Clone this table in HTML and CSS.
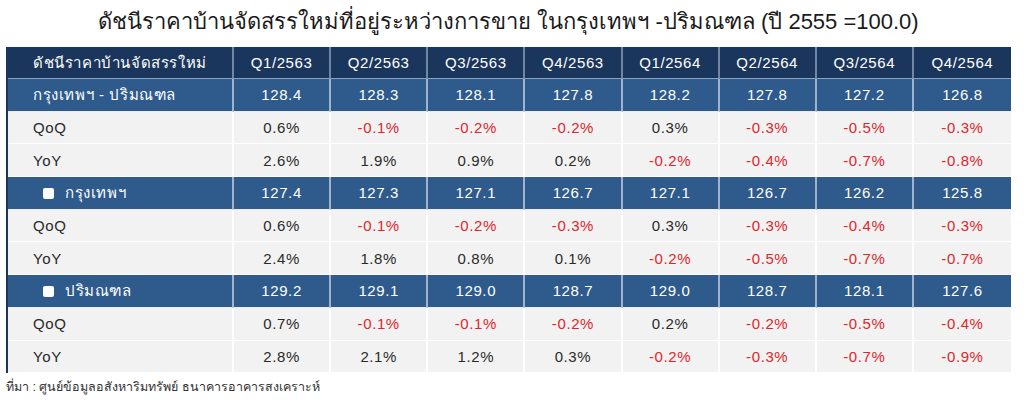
FILE: index.html
```html
<!DOCTYPE html>
<html lang="th">
<head>
<meta charset="utf-8">
<link rel="stylesheet" href="styles.css">
</head>
<body>
<div class="wrap">
  <h1 class="title">ดัชนีราคาบ้านจัดสรรใหม่ที่อยู่ระหว่างการขาย ในกรุงเทพฯ -ปริมณฑล (ปี 2555 =100.0)</h1>
  <table class="idx">
    <colgroup><col class="c-label"><col span="8"></colgroup>
    <tr class="head">
      <th class="label">ดัชนีราคาบ้านจัดสรรใหม่</th>
      <th>Q1/2563</th><th>Q2/2563</th><th>Q3/2563</th><th>Q4/2563</th>
      <th>Q1/2564</th><th>Q2/2564</th><th>Q3/2564</th><th>Q4/2564</th>
    </tr>
    <tr class="band">
      <td class="label">กรุงเทพฯ - ปริมณฑล</td>
      <td>128.4</td><td>128.3</td><td>128.1</td><td>127.8</td><td>128.2</td><td>127.8</td><td>127.2</td><td>126.8</td>
    </tr>
    <tr class="light">
      <td class="label">QoQ</td>
      <td>0.6%</td><td class="neg">-0.1%</td><td class="neg">-0.2%</td><td class="neg">-0.2%</td><td>0.3%</td><td class="neg">-0.3%</td><td class="neg">-0.5%</td><td class="neg">-0.3%</td>
    </tr>
    <tr class="light">
      <td class="label">YoY</td>
      <td>2.6%</td><td>1.9%</td><td>0.9%</td><td>0.2%</td><td class="neg">-0.2%</td><td class="neg">-0.4%</td><td class="neg">-0.7%</td><td class="neg">-0.8%</td>
    </tr>
    <tr class="band">
      <td class="label sub"><span class="bullet"></span>กรุงเทพฯ</td>
      <td>127.4</td><td>127.3</td><td>127.1</td><td>126.7</td><td>127.1</td><td>126.7</td><td>126.2</td><td>125.8</td>
    </tr>
    <tr class="light">
      <td class="label">QoQ</td>
      <td>0.6%</td><td class="neg">-0.1%</td><td class="neg">-0.2%</td><td class="neg">-0.3%</td><td>0.3%</td><td class="neg">-0.3%</td><td class="neg">-0.4%</td><td class="neg">-0.3%</td>
    </tr>
    <tr class="light">
      <td class="label">YoY</td>
      <td>2.4%</td><td>1.8%</td><td>0.8%</td><td>0.1%</td><td class="neg">-0.2%</td><td class="neg">-0.5%</td><td class="neg">-0.7%</td><td class="neg">-0.7%</td>
    </tr>
    <tr class="band">
      <td class="label sub"><span class="bullet"></span>ปริมณฑล</td>
      <td>129.2</td><td>129.1</td><td>129.0</td><td>128.7</td><td>129.0</td><td>128.7</td><td>128.1</td><td>127.6</td>
    </tr>
    <tr class="light">
      <td class="label">QoQ</td>
      <td>0.7%</td><td class="neg">-0.1%</td><td class="neg">-0.1%</td><td class="neg">-0.2%</td><td>0.2%</td><td class="neg">-0.2%</td><td class="neg">-0.5%</td><td class="neg">-0.4%</td>
    </tr>
    <tr class="light">
      <td class="label">YoY</td>
      <td>2.8%</td><td>2.1%</td><td>1.2%</td><td>0.3%</td><td class="neg">-0.2%</td><td class="neg">-0.3%</td><td class="neg">-0.7%</td><td class="neg">-0.9%</td>
    </tr>
  </table>
  <p class="source">ที่มา : ศูนย์ข้อมูลอสังหาริมทรัพย์ ธนาคารอาคารสงเคราะห์</p>
</div>
</body>
</html>
```

FILE: styles.css
```css
html, body {
  margin: 0;
  padding: 0;
  background: #ffffff;
}

body {
  font-family: "Liberation Sans", Arial, sans-serif;
  color: #222222;
}

.wrap {
  width: 1005px;
  margin-left: 6px;
}

.title {
  margin: 0;
  height: 47px;
  line-height: 44px;
  font-size: 22px;
  font-weight: normal;
  text-align: center;
  color: #1a1a1a;
  white-space: nowrap;
}

.idx {
  width: 1005px;
  table-layout: fixed;
  border-collapse: separate;
  border-spacing: 0;
  border-left: 2px solid #1b365d;
  font-size: 15px;
  letter-spacing: 0.6px;
}

.c-label {
  width: 226px;
}

.idx th,
.idx td {
  padding: 0;
  text-align: center;
  vertical-align: middle;
  border-right: 2px solid #ffffff;
  border-bottom: 1px solid #ffffff;
}

.idx th:last-child,
.idx td:last-child {
  border-right: none;
}

.idx .label {
  text-align: left;
  padding-left: 25px;
}

.head {
  height: 32px;
}

.head th {
  background: #1b365d;
  color: #ffffff;
  font-weight: normal;
  border-right-color: #6f86a6;
  border-bottom-color: #8ea3bf;
}

.band,
.light {
  height: 32.7px;
}

.band td {
  background: #2e5a8c;
  color: #ffffff;
  border-right-color: #9fb3cc;
  border-bottom-color: #e8edf3;
}

.light td {
  background: #f2f2f2;
  color: #2a2a2a;
}

.light td.neg {
  color: #e0262b;
}

.idx .sub {
  padding-left: 35px;
}

.bullet {
  display: inline-block;
  width: 11px;
  height: 11px;
  background: #ffffff;
  border-radius: 2px;
  margin-right: 11px;
  vertical-align: -1px;
}

.source {
  margin: 4px 0 0 0;
  font-size: 12.5px;
  color: #333333;
}
```
